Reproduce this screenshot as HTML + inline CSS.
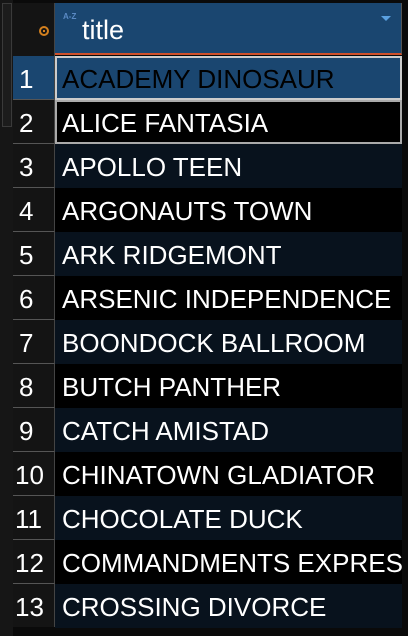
<!DOCTYPE html>
<html><head><style>
body{margin:0;width:408px;height:636px;background:#0a0a0a;overflow:hidden;font-family:"Liberation Sans","DejaVu Sans",sans-serif;position:relative}
.strip{position:absolute;left:0;top:0;width:13px;height:636px;background:#161616}
.thumb{position:absolute;left:2px;top:3px;width:8px;height:122px;background:#1c1c1c;border:1px solid #3a3a3a}
.corner{position:absolute;left:13px;top:3px;width:41px;height:53px;background:#141414;border-right:1px solid #444}
.dot{position:absolute;left:26px;top:23px;width:6px;height:6px;border:2px solid #d4801e;border-radius:50%}
.dot:after{content:"";position:absolute;left:2px;top:2px;width:2px;height:2px;background:#d4801e}
.hdr{position:absolute;left:55px;top:3px;width:346px;height:50px;background:#1a4670;border-bottom:2px solid #d0502a;border-right:1px solid #555}
.az{position:absolute;left:8px;top:9px;font-size:8px;color:#5a8ac4;font-weight:bold}
.title{position:absolute;left:27px;top:12px;font-size:27px;color:#fff}
.tri{position:absolute;right:10px;top:13px;width:0;height:0;border-left:5px solid transparent;border-right:5px solid transparent;border-top:5px solid #5aa0e0}
.row{position:absolute;left:13px;width:389px;height:44px}
.num{position:absolute;left:0;top:0;width:41px;height:43px;background:#141414;border-right:1px solid #444;border-bottom:1px solid #555;color:#fff;font-size:26px;line-height:46px}
.num span{position:absolute;left:6px}
.cell{position:absolute;left:42px;top:0;width:347px;height:44px;color:#fff;font-size:26px;line-height:46px;padding-left:7px;box-sizing:border-box;white-space:nowrap;overflow:hidden}
.odd .cell{background:#08121d}.even .cell{background:#000}
</style></head><body>
<div class="strip"><div class="thumb"></div></div>
<div class="corner"><div class="dot"></div></div>
<div class="hdr"><div class="az">A-Z</div><div class="title">title</div><div class="tri"></div></div>
<div class="row" style="top:56px"><div class="num" style="background:#1a4670"><span>1</span></div><div class="cell" style="background:#1a4670;color:#000;border:2px solid #ccc;line-height:42px;padding-left:5px">ACADEMY DINOSAUR</div></div>
<div class="row" style="top:100px"><div class="num"><span>2</span></div><div class="cell" style="background:#000;border:2px solid #aaa;line-height:42px;padding-left:5px">ALICE FANTASIA</div></div>
<div class="row odd" style="top:144px"><div class="num"><span>3</span></div><div class="cell">APOLLO TEEN</div></div>
<div class="row even" style="top:188px"><div class="num"><span>4</span></div><div class="cell">ARGONAUTS TOWN</div></div>
<div class="row odd" style="top:232px"><div class="num"><span>5</span></div><div class="cell">ARK RIDGEMONT</div></div>
<div class="row even" style="top:276px"><div class="num"><span>6</span></div><div class="cell">ARSENIC INDEPENDENCE</div></div>
<div class="row odd" style="top:320px"><div class="num"><span>7</span></div><div class="cell">BOONDOCK BALLROOM</div></div>
<div class="row even" style="top:364px"><div class="num"><span>8</span></div><div class="cell">BUTCH PANTHER</div></div>
<div class="row odd" style="top:408px"><div class="num"><span>9</span></div><div class="cell">CATCH AMISTAD</div></div>
<div class="row even" style="top:452px"><div class="num"><span style="left:2px">10</span></div><div class="cell">CHINATOWN GLADIATOR</div></div>
<div class="row odd" style="top:496px"><div class="num"><span style="left:2px">11</span></div><div class="cell">CHOCOLATE DUCK</div></div>
<div class="row even" style="top:540px"><div class="num"><span style="left:2px">12</span></div><div class="cell">COMMANDMENTS EXPRESS</div></div>
<div class="row odd" style="top:584px"><div class="num" style="border-bottom:none"><span style="left:2px">13</span></div><div class="cell">CROSSING DIVORCE</div></div>
</body></html>
